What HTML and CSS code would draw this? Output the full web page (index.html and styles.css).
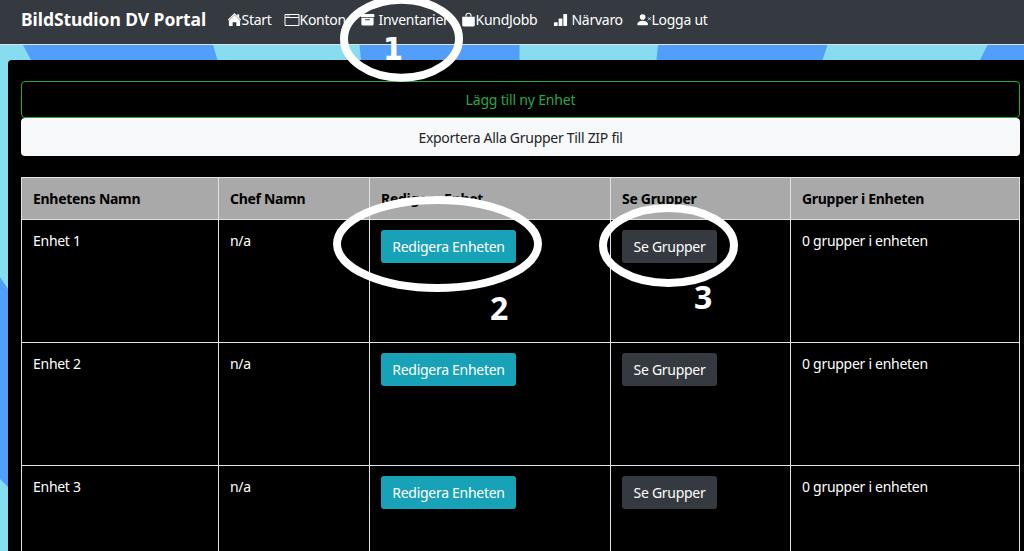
FILE: index.html
```html
<!DOCTYPE html>
<html lang="sv">
<head>
<meta charset="utf-8">
<title>BildStudion DV Portal</title>
<link rel="stylesheet" href="styles.css">
</head>
<body>
<svg class="backdrop" width="1024" height="551" viewBox="0 0 1024 551">
  <path fill="#519efb" d="M23 45H213L217.5 60H31zM359.5 45H519.5V60H361zM658 45H827.5L822.5 60H656.5zM987.5 45H1024V60H980zM0 277L8 289V487L0 479z"/>
</svg>
<header class="navbar">
  <a class="brand">BildStudion DV Portal</a>
  <nav class="links">
    <a class="link start"><svg class="icon" viewBox="0 0 16 16" fill="currentColor"><path d="M8 3.300l6 6V14a1 1 0 0 1-1 1H10v-4H6v4H3a1 1 0 0 1-1-1V9.300z"/><path d="M13 2.500V6l-2-2V2.500zM8 1L.8 8.200l.9.900L8 2.800l6.300 6.300.9-.9z"/></svg><span>Start</span></a>
    <a class="link konton"><svg class="icon wide" viewBox="0 0 16 14" fill="none" stroke="currentColor"><path d="M1 1.500h14v11H1zM1 4.500h14"/><path stroke-width=".7" d="M2.500 3h3"/></svg><span>Konton</span></a>
    <a class="link inventarier"><svg class="icon" viewBox="0 0 16 16" fill="currentColor"><path d="M1.500 2h13q.8 0 .8.800V5.200H.7V2.800Q.7 2 1.500 2z"/><path fill-rule="evenodd" d="M1.500 6.200h13V13q0 1.500-1.500 1.500H3Q1.500 14.500 1.500 13zM5.500 7.700v1h5v-1z"/></svg><span>Inventarier</span></a>
    <a class="link kundjobb"><svg class="icon" viewBox="0 0 16 16" fill="currentColor"><path d="M1.300 5h13.400v8.500q0 2-2 2H3.300q-2 0-2-2z"/><path fill="none" stroke="currentColor" stroke-width="1.200" d="M5.300 5V4a2.700 2.700 0 0 1 5.400 0v1"/></svg><span>KundJobb</span></a>
    <a class="link narvaro"><svg class="icon" viewBox="0 0 16 16" fill="currentColor"><rect x="1" y="11" width="4" height="4" rx=".7"/><rect x="6" y="7" width="4" height="8" rx=".7"/><rect x="11" y="2" width="4" height="13" rx=".7"/></svg><span>Närvaro</span></a>
    <a class="link logga"><svg class="icon" viewBox="0 0 16 16" fill="currentColor"><circle cx="6" cy="5.300" r="3"/><path d="M1 14q-1 0-.7-1.400C1 10.500 3 9.300 6 9.300s5 1.200 5.700 3.300Q12 14 11 14z"/><path stroke="currentColor" stroke-width=".8" d="M11.500 5.500l3.500 3.500m0-3.500l-3.500 3.500"/></svg><span>Logga ut</span></a>
  </nav>
</header>
<main class="panel">
  <a class="btn-block add"><span>Lägg till ny Enhet</span></a>
  <a class="btn-block export"><span>Exportera Alla Grupper Till ZIP fil</span></a>
  <table class="units">
    <colgroup><col class="c1"><col class="c2"><col class="c3"><col class="c4"><col class="c5"></colgroup>
    <thead>
      <tr><th>Enhetens Namn</th><th>Chef Namn</th><th>Redigera Enhet</th><th>Se Grupper</th><th>Grupper i Enheten</th></tr>
    </thead>
    <tbody>
      <tr><td>Enhet 1</td><td>n/a</td><td><a class="btn edit">Redigera Enheten</a></td><td><a class="btn groups">Se Grupper</a></td><td>0 grupper i enheten</td></tr>
      <tr><td>Enhet 2</td><td>n/a</td><td><a class="btn edit">Redigera Enheten</a></td><td><a class="btn groups">Se Grupper</a></td><td>0 grupper i enheten</td></tr>
      <tr><td>Enhet 3</td><td>n/a</td><td><a class="btn edit">Redigera Enheten</a></td><td><a class="btn groups">Se Grupper</a></td><td>0 grupper i enheten</td></tr>
    </tbody>
  </table>
</main>
<svg class="marks" width="1024" height="551" viewBox="0 0 1024 551">
  <g fill="none" stroke="#fff" stroke-width="8">
    <ellipse cx="401.500" cy="38.700" rx="57.500" ry="39"/>
    <ellipse cx="437.500" cy="244" rx="100.500" ry="44"/>
    <ellipse cx="668.500" cy="245.500" rx="65.500" ry="37.500"/>
  </g>
  <g class="digits">
    <text class="one" x="383" y="60" textLength="20" lengthAdjust="spacingAndGlyphs">1</text>
    <text x="490" y="320">2</text>
    <text x="694" y="309">3</text>
  </g>
</svg>
</body>
</html>
```
FILE: styles.css
```css
* { box-sizing: border-box; }
body {
  margin: 0;
  width: 1024px;
  height: 551px;
  overflow: hidden;
  position: relative;
  background: #87dcef;
  font: 14px/21px "Noto Sans", "Open Sans", sans-serif;
  letter-spacing: -.28px;
  color: #fff;
}
.backdrop, .marks { position: absolute; left: 0; top: 0; }
.marks { pointer-events: none; }
.navbar {
  position: relative;
  height: 45px;
  display: flex;
  align-items: center;
  padding: 0 0 5px 21px;
  background: #353940;
  border-bottom: 1px solid #dee2e6;
}
.brand { width: 206px; font-size: 17.500px; font-weight: 700; letter-spacing: -.06px; white-space: nowrap; }
.links { display: flex; }
.link { display: flex; align-items: center; white-space: nowrap; letter-spacing: -.27px; }
.link span { margin-left: -.5px; }
.start { width: 57px; }
.konton { width: 76px; }
.inventarier { width: 101px; }
.kundjobb { width: 92px; }
.narvaro { width: 84px; }
.icon { width: 15px; height: 15px; flex: none; }
.konton .icon { width: 16px; height: 14px; }
.inventarier .icon, .narvaro .icon { margin-right: 4px; }
.panel {
  position: relative;
  margin: 15px 0 0 8px;
  height: 491px;
  padding: 21px 4px 0 13px;
  background: #000;
  border-radius: 4px 0 0 0;
  overflow: hidden;
}
.btn-block {
  display: flex;
  align-items: center;
  justify-content: center;
  border-radius: 4px;
}
.add { height: 37px; border: 1px solid #28a745; color: #28a745; letter-spacing: -.18px; }
.export { height: 38px; background: #f8f9fa; color: #212529; }
.units {
  width: 999px;
  margin-top: 21px;
  border-collapse: collapse;
  table-layout: fixed;
}
.c1 { width: 197px; }
.c2 { width: 151px; }
.c3 { width: 241px; }
.c4 { width: 180px; }
.units th, .units td {
  border: 1px solid #dee2e6;
  padding: 10px 11px;
  text-align: left;
  vertical-align: top;
  white-space: nowrap;
}
.units th { height: 42px; background: #a9a9a9; color: #000; letter-spacing: -.3px; }
.units td { height: 123px; }
.btn {
  display: flex;
  height: 33px;
  align-items: center;
  justify-content: center;
  border-radius: 3px;
}
.edit { width: 135px; background: #17a2b8; }
.groups { width: 95px; background: #343a40; }
.digits { fill: #fff; font-size: 32px; font-weight: 700; letter-spacing: 0; }
.one { font-family: "DejaVu Sans", sans-serif; }
```
